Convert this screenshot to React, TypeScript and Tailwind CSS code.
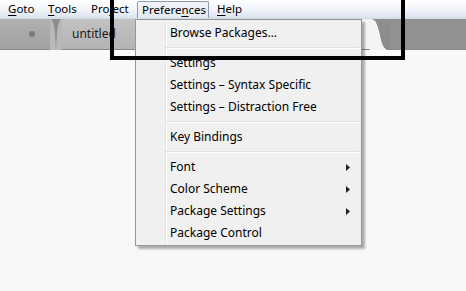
import React from "react";

function U({ children }: { children: React.ReactNode }) {
  return <span className="underline underline-offset-[2px] decoration-[1px]">{children}</span>;
}

function Item({ label, arrow }: { label: string; arrow?: boolean }) {
  return (
    <div className="flex h-[22px] items-center pl-[34px] pr-[11px] text-[12px] text-[#000]">
      <span className="flex-1 whitespace-nowrap">{label}</span>
      {arrow && (
        <svg width="4" height="7" viewBox="0 0 4 7">
          <path d="M0 0 L4 3.5 L0 7 Z" fill="#222" />
        </svg>
      )}
    </div>
  );
}

function Sep() {
  return (
    <div className="h-[8px] pl-[30px] pr-[2px] flex flex-col justify-center">
      <div className="h-[1px] bg-[#e0e0e0]" />
      <div className="h-[1px] bg-[#ffffff]" />
    </div>
  );
}

export default function App() {
  return (
    <div className="relative w-[466px] h-[291px] overflow-hidden bg-[#f8f8f8] font-['Noto_Sans',sans-serif] flex flex-col">
      {/* menu bar */}
      <div className="flex h-[19px] shrink-0 items-stretch text-[11.5px] text-black bg-linear-to-b from-[#ffffff] via-[#f3f5fa] to-[#dbe3f0] border-b border-[#d3d9e5]">
        <div className="ml-[1px] w-[40px] pl-[7px] flex items-center"><U>G</U>oto</div>
        <div className="w-[43px] pl-[7px] flex items-center"><U>T</U>ools</div>
        <div className="w-[52px] pl-[7px] flex items-center">Pro<U>j</U>ect</div>
        <div className="ml-[1px] w-[72px] pl-[4px] mt-[1px] flex items-center border border-b-0 border-[#8f9bb0] bg-linear-to-b from-[#f2f4f8] to-[#e4e9f1] rounded-t-[2px]">Prefere<U>n</U>ces</div>
        <div className="pl-[8px] flex items-center"><U>H</U>elp</div>
      </div>

      {/* tab strip */}
      <div className="flex h-[31px] shrink-0 bg-[#919191] border-b border-[#8a8a8a]">
        <div className="w-[50px] bg-linear-to-b from-[#b0b0b0] to-[#a2a2a2] flex items-center justify-end pr-[15px]">
          <div className="w-[6px] h-[6px] rounded-full bg-[#7b7b7b]" />
        </div>
        <svg width="12" height="31" viewBox="0 0 12 31" className="shrink-0">
          <rect x="0" y="0" width="12" height="31" fill="#b8b8b8" />
          <path d="M0 0 C3 0 4 6 5 14 C5.5 22 6 28 6 31 C6 28 6.5 22 7 14 C8 6 9 0 12 0 Z" fill="#8d8d8d" />
        </svg>
        <div className="w-[250px] bg-linear-to-b from-[#c2c2c2] to-[#b4b4b4] flex items-center pl-[10px] text-[12px] text-[#1a1a1a]">
          untitled
        </div>
        <div className="w-[58px] bg-[#f4f4f4]" />
        <svg width="20" height="31" viewBox="0 0 20 31" className="shrink-0">
          <rect x="0" y="0" width="20" height="31" fill="#8e8e8e" />
          <path d="M0 0 L2 0 C6 0 8 6 10 14 C12 24 14 31 19 31 L0 31 Z" fill="#f4f4f4" />
          <path d="M2 0 C6 0 8 6 10 14 C12 24 14 31 19 31" fill="none" stroke="#7c7c7c" strokeWidth="0.8" />
        </svg>
        <div className="flex-1" />
      </div>

      <div className="flex-1 bg-[#f8f8f8]" />

      {/* dropdown menu */}
      <div className="absolute left-[135px] top-[19px] w-[227px] border border-[#979797] bg-[#f0f0f0] shadow-[3px_3px_2px_rgba(0,0,0,0.3)] pt-[2px] pb-[1px]">
        <div className="absolute left-[29px] top-0 bottom-0 w-[1px] bg-[#e2e3e3]" />
        <div className="absolute left-[30px] top-0 bottom-0 w-[1px] bg-[#ffffff]" />
        <div className="relative">
          <Item label="Browse Packages…" />
          <Sep />
          <Item label="Settings" />
          <Item label="Settings – Syntax Specific" />
          <Item label="Settings – Distraction Free" />
          <Sep />
          <Item label="Key Bindings" />
          <Sep />
          <Item label="Font" arrow />
          <Item label="Color Scheme" arrow />
          <Item label="Package Settings" arrow />
          <Item label="Package Control" />
        </div>
      </div>

      {/* annotation rectangle */}
      <div className="absolute left-[110px] top-[-4px] w-[295px] h-[64px] border-[4px] border-black pointer-events-none" />
    </div>
  );
}
